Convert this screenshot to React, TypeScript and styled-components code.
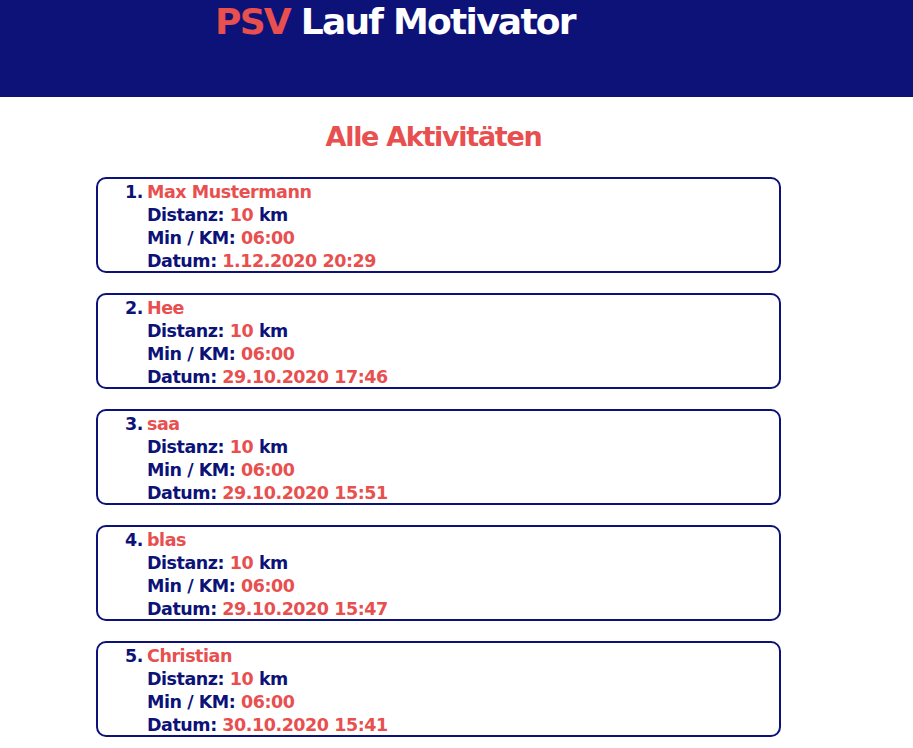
import React from "react";
import styled, { createGlobalStyle } from "styled-components";

const NAVY = "#0c1278";
const RED = "#e84f4f";

const Global = createGlobalStyle`
  html, body { margin: 0; padding: 0; background: #fff; }
  body { font-family: "DejaVu Sans", Verdana, sans-serif; font-weight: bold; }
`;

const Header = styled.header`
  background: ${NAVY};
  height: 97px;
  box-sizing: border-box;
  padding: 0 0 0 215px;
`;

const Title = styled.h1`
  margin: 0;
  font-size: 36px;
  line-height: 44px;
  letter-spacing: -1.75px;
  color: #fff;
  font-weight: bold;
`;

const Red = styled.span`
  color: ${RED};
`;

const Main = styled.main`
  width: 685px;
  margin-left: 96px;
  padding-top: 23px;
`;

const Heading = styled.h2`
  margin: 0 0 23px 0;
  text-align: center;
  color: ${RED};
  font-size: 27px;
  line-height: 34px;
  letter-spacing: -1.3px;
  padding-right: 10px;
`;

const List = styled.ol`
  list-style: none;
  margin: 0;
  padding: 0;
  display: flex;
  flex-direction: column;
  gap: 20px;
`;

const Card = styled.li`
  border: 2px solid ${NAVY};
  border-radius: 10px;
  height: 96px;
  box-sizing: border-box;
  display: grid;
  grid-template-columns: 45px 1fr;
  column-gap: 4px;
  color: ${NAVY};
  font-size: 17.5px;
  line-height: 23px;
  letter-spacing: -0.45px;
  padding-top: 2px;
`;

const Num = styled.span`
  text-align: right;
`;

const Lines = styled.div`
  display: flex;
  flex-direction: column;
`;

const Line = styled.div`
  white-space: nowrap;
`;

const items = [
  { name: "Max Mustermann", datum: "1.12.2020 20:29" },
  { name: "Hee", datum: "29.10.2020 17:46" },
  { name: "saa", datum: "29.10.2020 15:51" },
  { name: "blas", datum: "29.10.2020 15:47" },
  { name: "Christian", datum: "30.10.2020 15:41" },
];

export default function App() {
  return (
    <>
      <Global />
      <Header>
        <Title>
          <Red>PSV</Red> Lauf Motivator
        </Title>
      </Header>
      <Main>
        <Heading>Alle Aktivitäten</Heading>
        <List>
          {items.map((it, i) => (
            <Card key={i}>
              <Num>{i + 1}.</Num>
              <Lines>
                <Line>
                  <Red>{it.name}</Red>
                </Line>
                <Line>
                  Distanz: <Red>10</Red> km
                </Line>
                <Line>
                  Min / KM: <Red>06:00</Red>
                </Line>
                <Line>
                  Datum: <Red>{it.datum}</Red>
                </Line>
              </Lines>
            </Card>
          ))}
        </List>
      </Main>
    </>
  );
}
